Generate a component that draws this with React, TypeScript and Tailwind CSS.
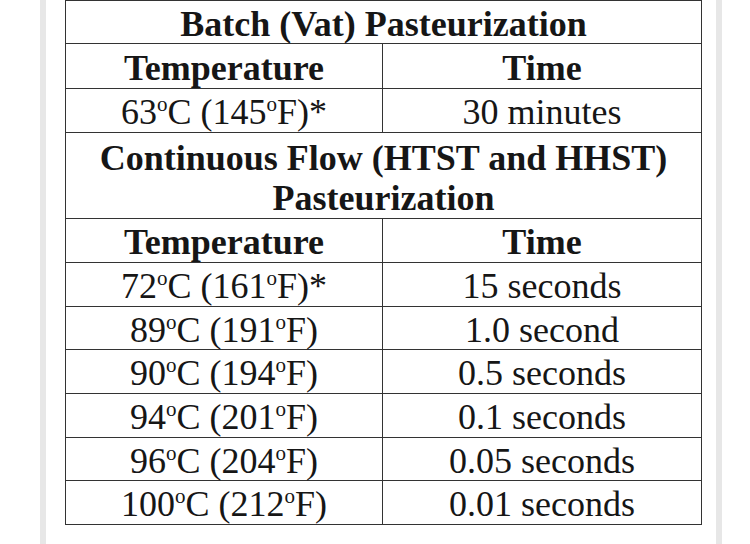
import React from 'react';

// small raised "o" used for the degree mark, as in the scanned table
function Deg() {
  return <span className="relative bottom-[13px] text-[21px] leading-none">o</span>;
}

function Temp({ c, f, star }: { c: string; f: string; star?: boolean }) {
  return (
    <span>
      {c}
      <Deg />C ({f}
      <Deg />F){star ? '*' : ''}
    </span>
  );
}

const rows: { c: string; f: string; star?: boolean; time: string }[] = [
  { c: '72', f: '161', star: true, time: '15 seconds' },
  { c: '89', f: '191', time: '1.0 second' },
  { c: '90', f: '194', time: '0.5 seconds' },
  { c: '94', f: '201', time: '0.1 seconds' },
  { c: '96', f: '204', time: '0.05 seconds' },
  { c: '100', f: '212', time: '0.01 seconds' },
];

const rowHeights = ['h-[44px]', 'h-[43px]', 'h-[44px]', 'h-[44px]', 'h-[43px]', 'h-[44px]'];

function Row({ left, right, bold, h }: { left: React.ReactNode; right: string; bold?: boolean; h: string }) {
  return (
    <div className={`flex border-b-[1.5px] border-[#333] ${h} ${bold ? 'font-bold' : ''}`}>
      <div className="w-[317px] border-r-[1.5px] border-[#333] flex items-center justify-center leading-none pt-[3px]">
        {left}
      </div>
      <div className="flex-1 flex items-center justify-center leading-none pt-[3px]">{right}</div>
    </div>
  );
}

export default function App() {
  return (
    <div className="w-[750px] h-[544px] bg-white overflow-hidden">
      <div className="ml-[40px] w-[682px] h-full border-x-[6px] border-[#e7e7e7] pl-[19px] pr-[14px]">
        <div
          className="w-[637px] border-x-[1.5px] border-t-[1.5px] border-[#333] text-[36px] text-[#161616]"
          style={{ fontFamily: '"Liberation Serif", "Times New Roman", serif' }}
        >
          {/* Batch section */}
          <div className="h-[43px] border-b-[1.5px] border-[#333] flex items-center justify-center font-bold leading-none pt-[3px]">
            Batch (Vat) Pasteurization
          </div>
          <Row left="Temperature" right="Time" bold h="h-[45px]" />
          <Row left={<Temp c="63" f="145" star />} right="30 minutes" h="h-[44px]" />

          {/* Continuous flow section */}
          <div className="h-[86px] border-b-[1.5px] border-[#333] flex flex-col items-center justify-center font-bold leading-[40px] pt-[4px]">
            <span>Continuous Flow (HTST and HHST)</span>
            <span>Pasteurization</span>
          </div>
          <Row left="Temperature" right="Time" bold h="h-[44px]" />
          {rows.map((r, i) => (
            <Row key={r.c} left={<Temp c={r.c} f={r.f} star={r.star} />} right={r.time} h={rowHeights[i]} />
          ))}
        </div>
      </div>
    </div>
  );
}
